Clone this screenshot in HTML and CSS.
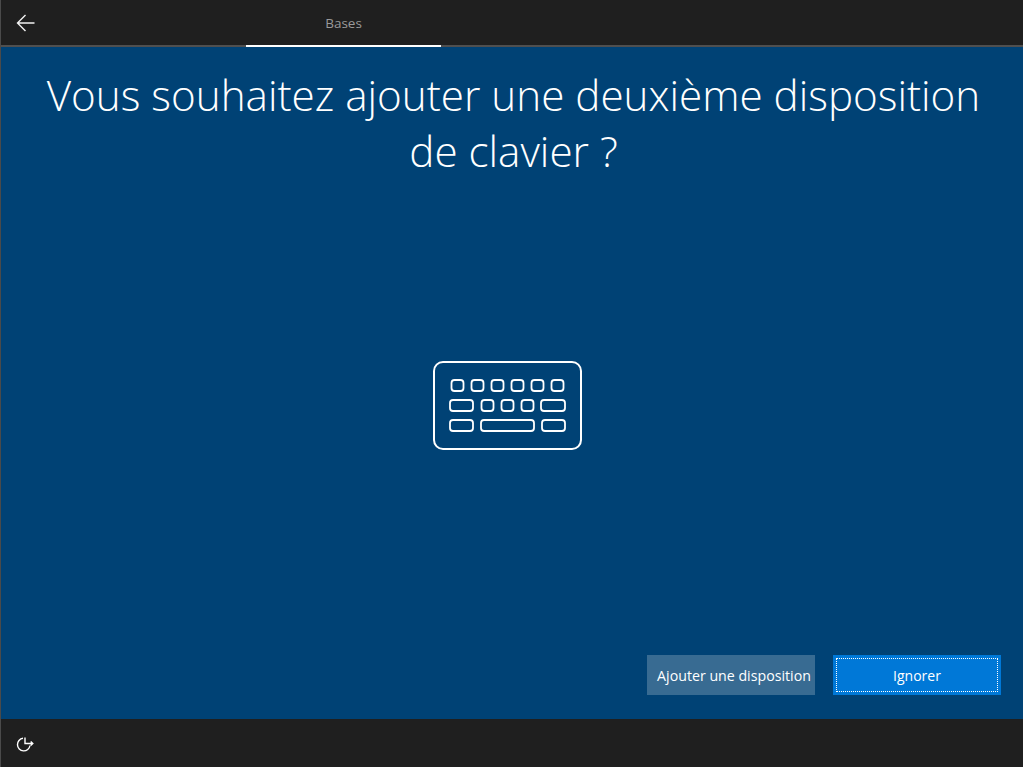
FILE: index.html
```html
<!DOCTYPE html>
<html lang="fr">
<head>
<meta charset="utf-8">
<title>Bases</title>
<link rel="stylesheet" href="styles.css">
</head>
<body>
<div class="app">
  <header class="topbar">
    <button class="back" aria-label="Retour">
      <svg width="20" height="18" viewBox="0 0 20 18" fill="none" stroke="#f2f2f2" stroke-width="1.4"><path d="M18.5 9H1.5M9.5 1L1.5 9l8 8"/></svg>
    </button>
    <div class="tab">Bases</div>
  </header>
  <main class="main">
    <h1 class="title">Vous souhaitez ajouter une deuxième disposition de clavier ?</h1>
    <div class="art">
      <svg width="150" height="90" viewBox="0 0 150 90" fill="none" stroke="#fff">
        <rect x="1" y="1" width="147" height="87" rx="9" stroke-width="2"/>
        <g stroke-width="1.8">
          <rect x="18.5" y="19" width="12" height="11" rx="3"/>
          <rect x="38.5" y="19" width="12" height="11" rx="3"/>
          <rect x="58.5" y="19" width="12" height="11" rx="3"/>
          <rect x="78.5" y="19" width="12" height="11" rx="3"/>
          <rect x="98.5" y="19" width="12" height="11" rx="3"/>
          <rect x="118.5" y="19" width="12" height="11" rx="3"/>
          <rect x="17" y="39" width="23" height="11" rx="3"/>
          <rect x="48.5" y="39" width="12" height="11" rx="3"/>
          <rect x="68.5" y="39" width="12" height="11" rx="3"/>
          <rect x="88.5" y="39" width="12" height="11" rx="3"/>
          <rect x="108" y="39" width="24" height="11" rx="3"/>
          <rect x="17" y="59" width="23" height="11" rx="3"/>
          <rect x="48" y="59" width="53" height="11" rx="3"/>
          <rect x="109" y="59" width="23" height="11" rx="3"/>
        </g>
      </svg>
    </div>
    <div class="actions">
      <button class="btn btn-secondary">Ajouter une disposition</button>
      <button class="btn btn-primary"><span class="focus">Ignorer</span></button>
    </div>
  </main>
  <footer class="footer">
    <svg width="18" height="18" viewBox="0 0 18 18" fill="none" stroke="#fff" stroke-width="1.4"><path d="M7 3.3A6.3 6.3 0 1 0 14 10.5M9 2.4V8.5H17M14.7 6.5L16.8 8.5L14.7 10.5"/></svg>
  </footer>
</div>
</body>
</html>
```
FILE: styles.css
```css
* { box-sizing: border-box; }
html, body { margin: 0; height: 100%; }
body { background: #1f1f1f; font-family: "Open Sans", "Liberation Sans", sans-serif; color: #fff; overflow: hidden; }
.app { display: flex; flex-direction: column; height: 767px; width: 1023px; border-left: 1px solid #4a4a4a; }
.topbar { height: 47px; flex: none; display: flex; background: #1f1f1f; border-bottom: 2px solid #4f4f4f; padding-left: 15px; }
.back { width: 20px; height: 18px; margin-top: 14px; padding: 0; background: none; border: 0; display: block; }
.tab { width: 195px; margin-left: 210px; margin-bottom: -2px; border-bottom: 2px solid #fff; color: #9a9a9a; font-size: 13.5px; text-align: center; padding-top: 14px; }
.main { flex: 1; background: #004275; display: flex; flex-direction: column; align-items: center; padding: 20px 0 24px; min-height: 0; }
.title { margin: 0 0 0 3px; width: 990px; font-size: 42.2px; font-weight: 300; line-height: 56px; text-align: center; }
.art { flex: 1; display: flex; align-items: center; justify-content: center; margin-right: 9px; padding-bottom: 22px; }
.actions { align-self: flex-end; display: flex; gap: 18px; margin-right: 22px; }
.btn { width: 168px; height: 40px; border: 0; padding: 0; color: #fff; font: 14px "Open Sans", "Liberation Sans", sans-serif; }
.btn-secondary { background: #386b92; font-size: 14.2px; padding-left: 6px; }
.btn-primary { background: #0078d7; padding: 3px; }
.focus { display: flex; height: 100%; align-items: center; justify-content: center; border: 1px dotted #fff; }
.footer { height: 48px; flex: none; background: #1f1f1f; padding: 16px 0 0 15px; }
```
